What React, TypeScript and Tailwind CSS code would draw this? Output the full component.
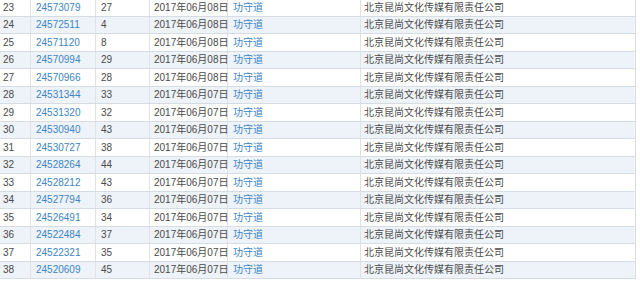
import React from "react";

const rows: [number, string, number, string][] = [
  [23, "24573079", 27, "2017年06月08日"],
  [24, "24572511", 4, "2017年06月08日"],
  [25, "24571120", 8, "2017年06月08日"],
  [26, "24570994", 29, "2017年06月08日"],
  [27, "24570966", 28, "2017年06月08日"],
  [28, "24531344", 33, "2017年06月07日"],
  [29, "24531320", 32, "2017年06月07日"],
  [30, "24530940", 43, "2017年06月07日"],
  [31, "24530727", 38, "2017年06月07日"],
  [32, "24528264", 44, "2017年06月07日"],
  [33, "24528212", 43, "2017年06月07日"],
  [34, "24527794", 36, "2017年06月07日"],
  [35, "24526491", 34, "2017年06月07日"],
  [36, "24522484", 37, "2017年06月07日"],
  [37, "24522321", 35, "2017年06月07日"],
  [38, "24520609", 45, "2017年06月07日"],
];

export default function App() {
  return (
    <div
      className="w-[640px] h-[281px] overflow-hidden bg-white text-[10px] text-[#4a4a4a]"
      style={{ fontFamily: '"Liberation Sans", "Noto Sans CJK SC", sans-serif' }}
    >
      <div className="w-[636px] -mt-[1px] border-r border-[#dcdcdc]">
        {rows.map(([n, id, c, d]) => (
          <div
            key={n}
            className={`grid grid-cols-[31px_65px_54px_78px_133px_274px] h-[17.5px] whitespace-nowrap leading-none border-b border-[#d6dce4] ${
              n % 2 === 0 ? "bg-[#eef3f9]" : "bg-white"
            }`}
          >
            <div className="pl-[3px] pt-[1px] flex items-center border-r border-[#e2e2e2]">{n}</div>
            <div className="pl-[5px] pt-[1px] flex items-center border-r border-[#e2e2e2] text-[#3c84c4]">{id}</div>
            <div className="pl-[5px] pt-[1px] flex items-center border-r border-[#e2e2e2]">{c}</div>
            <div className="pl-[4px] pt-[1px] flex items-center border-r border-[#e2e2e2]">{d}</div>
            <div className="pl-[5px] pt-[1px] flex items-center border-r border-[#e2e2e2] text-[#3c84c4]">功守道</div>
            <div className="pl-[3px] pt-[1px] flex items-center">北京昆尚文化传媒有限责任公司</div>
          </div>
        ))}
      </div>
    </div>
  );
}
